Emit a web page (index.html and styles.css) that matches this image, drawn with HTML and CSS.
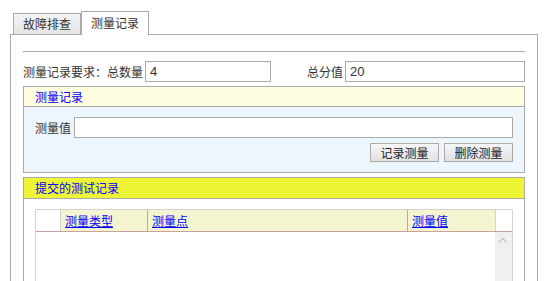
FILE: index.html
```html
<!DOCTYPE html>
<html lang="zh-CN">
<head>
    <meta charset="UTF-8">
    <title>测量记录</title>
    <link rel="stylesheet" href="styles.css">
</head>
<body>
    <div class="tabs">
        <div class="tab">故障排查</div>
        <div class="tab active">测量记录</div>
    </div>
    <div class="panel">
        <hr class="rule">
        <div class="req-row">
            <span>测量记录要求：总数量</span>
            <input type="text" class="inp inp-count" value="4">
            <span class="push">总分值</span>
            <input type="text" class="inp inp-score" value="20">
        </div>

        <div class="box">
            <div class="box-head">测量记录</div>
            <div class="box-body">
                <div class="val-row">
                    <span>测量值</span>
                    <input type="text" class="inp inp-val">
                </div>
                <div class="btn-row">
                    <button class="btn">记录测量</button>
                    <button class="btn">删除测量</button>
                </div>
            </div>
        </div>

        <div class="box box-list">
            <div class="box-head yellow">提交的测试记录</div>
            <div class="list-body">
                <div class="grid">
                    <div class="grid-head">
                        <div class="cell c-blank"></div>
                        <div class="cell c-type"><a href="#">测量类型</a></div>
                        <div class="cell c-point"><a href="#">测量点</a></div>
                        <div class="cell c-val"><a href="#">测量值</a></div>
                        <div class="cell c-sb"></div>
                    </div>
                    <div class="grid-body">
                        <div class="rows"></div>
                        <div class="scrollbar"><span class="arrow"></span></div>
                    </div>
                </div>
            </div>
        </div>
    </div>
</body>
</html>
```

FILE: styles.css
```css
body {
    margin: 0;
    font-family: "Noto Sans CJK SC", "Microsoft YaHei", sans-serif;
    font-size: 12px;
    color: #333;
    background: #fff;
    overflow: hidden;
}

.tabs {
    display: flex;
    align-items: flex-end;
    height: 34px;
    padding-left: 13px;
}

.tab {
    height: 20px;
    line-height: 20px;
    padding: 0 9px;
    border: 1px solid #aaa;
    border-bottom: none;
    background: linear-gradient(#f4f4f4, #e4e4e4);
    color: #333;
}

.tab.active {
    height: 23px;
    line-height: 22px;
    margin-bottom: -1px;
    background: #fff;
    position: relative;
    z-index: 1;
}

.panel {
    margin-left: 10px;
    width: 528px;
    height: 247px;
    border: 1px solid #aaa;
    border-bottom: none;
    padding: 0 12px;
    box-sizing: border-box;
}

.rule {
    margin: 16px 0 0;
    border: none;
    border-top: 1px solid #aaa;
    height: 0;
}

.req-row {
    display: flex;
    align-items: center;
    margin-top: 9px;
    height: 21px;
}

.push {
    margin-left: auto;
    margin-right: 2px;
}

.inp {
    box-sizing: border-box;
    height: 21px;
    border: 1px solid #aaa;
    padding: 0 4px;
    font-family: "Liberation Sans", sans-serif;
    font-size: 13px;
    color: #333;
    background: #fff;
}

.inp-count {
    width: 126px;
    margin-left: 2px;
}

.inp-score {
    width: 180px;
}

.box {
    margin-top: 4px;
    border: 1px solid #aaa;
}

.box-head {
    height: 19px;
    line-height: 19px;
    padding-left: 11px;
    color: #0000ff;
    background: #fffde0;
    border-bottom: 1px solid #aaa;
}

.box-head.yellow {
    height: 20px;
    line-height: 20px;
    background: #eef534;
}

.box-body {
    background: #eef6fd;
    padding: 10px 11px 10px 11px;
}

.val-row {
    display: flex;
    align-items: center;
    height: 21px;
}

.inp-val {
    flex: 1;
    margin-left: 3px;
}

.btn-row {
    display: flex;
    justify-content: flex-end;
    gap: 5px;
    margin-top: 5px;
}

.btn {
    width: 69px;
    height: 19px;
    padding: 0;
    border: 1px solid #aaa;
    background: linear-gradient(#f6f6f6, #e2e2e2);
    font-family: inherit;
    font-size: 12px;
    color: #222;
    line-height: 17px;
}

.box-list {
    margin-top: 4px;
    border-bottom: none;
}

.list-body {
    background: #fff;
    padding: 10px 11px 0 11px;
    height: 72px;
}

.grid {
    border: 1px solid #d3d3d3;
    border-bottom: none;
    height: 72px;
    box-sizing: border-box;
    display: flex;
    flex-direction: column;
}

.grid-head {
    display: flex;
    height: 21px;
    border-bottom: 1px solid #c9a19d;
}

.cell {
    line-height: 21px;
    background: #f4f4d0;
    border-right: 1px solid #c9a19d;
    box-sizing: border-box;
    padding-left: 4px;
}

.cell a {
    color: #0000ff;
}

.c-blank {
    width: 25px;
    background: #fff;
    border-right-color: #d3d3d3;
}

.c-type {
    width: 87px;
}

.c-point {
    width: 260px;
}

.c-val {
    width: 88px;
    border-right-color: #d3d3d3;
}

.c-sb {
    flex: 1;
    background: #fff;
    border-right: none;
}

.grid-body {
    flex: 1;
    display: flex;
}

.rows {
    flex: 1;
}

.scrollbar {
    width: 17px;
    background: #f0f0f0;
    position: relative;
}

.arrow {
    position: absolute;
    left: 5px;
    top: 7px;
    width: 5px;
    height: 5px;
    border-left: 1.5px solid #bbb;
    border-top: 1.5px solid #bbb;
    transform: rotate(45deg);
}
```
